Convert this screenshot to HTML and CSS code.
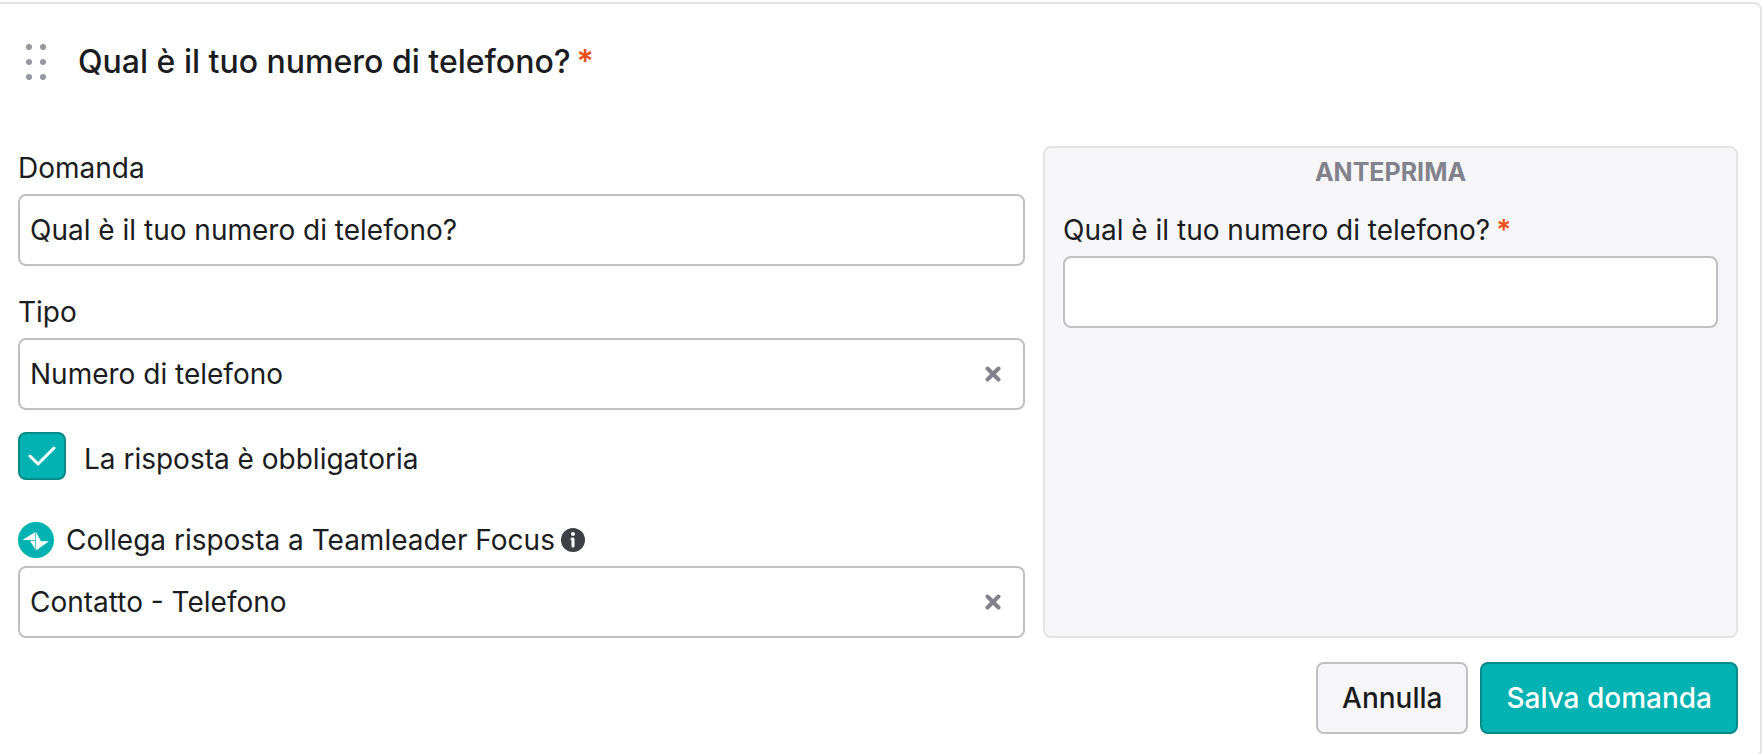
FILE: index.html
```
<!DOCTYPE html>
<html lang="it">
<head>
    <meta charset="UTF-8">
    <meta name="viewport" content="width=device-width, initial-scale=1.0">
    <title>Modifica domanda</title>
    <link rel="stylesheet" href="styles.css">
</head>
<body>
    <form class="question-card">
        <header class="question-header">
            <svg class="drag-handle" viewBox="0 0 20 36" fill="currentColor" aria-hidden="true">
                <circle cx="3" cy="3" r="3"/>
                <circle cx="17" cy="3" r="3"/>
                <circle cx="3" cy="18" r="3"/>
                <circle cx="17" cy="18" r="3"/>
                <circle cx="3" cy="33" r="3"/>
                <circle cx="17" cy="33" r="3"/>
            </svg>
            <h2 class="question-title">Qual è il tuo numero di telefono?<span class="required">*</span></h2>
        </header>

        <div class="question-body">
            <div class="fields">
                <div class="field">
                    <label class="label" for="question">Domanda</label>
                    <input class="input" id="question" type="text" value="Qual è il tuo numero di telefono?">
                </div>

                <div class="field">
                    <label class="label" for="type">Tipo</label>
                    <div class="select">
                        <select class="input" id="type">
                            <option>Numero di telefono</option>
                        </select>
                        <button class="clear" type="button" aria-label="Cancella tipo">
                            <svg viewBox="0 0 16 16" fill="none" stroke="currentColor" stroke-width="4" stroke-linecap="round">
                                <path d="M2.500 2.500l11 11M13.500 2.500l-11 11"/>
                            </svg>
                        </button>
                    </div>
                </div>

                <div class="check">
                    <input class="checkbox" id="required" type="checkbox" checked>
                    <svg class="check-mark" viewBox="0 0 28 20" fill="none" stroke="currentColor" stroke-width="3" stroke-linecap="round" stroke-linejoin="round" aria-hidden="true">
                        <path d="M2 10l8 8L26 2"/>
                    </svg>
                    <label class="check-label" for="required">La risposta è obbligatoria</label>
                </div>

                <div class="field">
                    <div class="label label-icons">
                        <svg class="logo" viewBox="0 0 36 36" aria-hidden="true">
                            <circle cx="18" cy="18" r="18" fill="#00b2b2"/>
                            <g fill="#fff">
                                <path d="M4.300 18L17.300 10v8z"/>
                                <path d="M18 10l5 9.300h8L19 27.700h-1z"/>
                                <path d="M12 18.700h5.400v8.800z"/>
                            </g>
                        </svg>
                        <label for="link">Collega risposta a Teamleader Focus</label>
                        <svg class="info" viewBox="0 0 24 24" aria-hidden="true">
                            <circle cx="12" cy="12" r="12" fill="#3f4046"/>
                            <circle cx="12" cy="6" r="2" fill="#fff"/>
                            <path d="M11 11h1v7" fill="none" stroke="#fff" stroke-width="3" stroke-linecap="round" stroke-linejoin="round"/>
                        </svg>
                    </div>
                    <div class="select">
                        <select class="input" id="link">
                            <option>Contatto - Telefono</option>
                        </select>
                        <button class="clear" type="button" aria-label="Cancella collegamento">
                            <svg viewBox="0 0 16 16" fill="none" stroke="currentColor" stroke-width="4" stroke-linecap="round">
                                <path d="M2.500 2.500l11 11M13.500 2.500l-11 11"/>
                            </svg>
                        </button>
                    </div>
                </div>
            </div>

            <section class="preview">
                <h3 class="preview-title">ANTEPRIMA</h3>
                <label class="label" for="preview">Qual è il tuo numero di telefono?<span class="required">*</span></label>
                <input class="input" id="preview" type="text">
            </section>
        </div>

        <footer class="actions">
            <button class="button" type="button">Annulla</button>
            <button class="button button-primary" type="submit">Salva domanda</button>
        </footer>
    </form>
</body>
</html>
```
FILE: styles.css
```
* {
    margin: 0;
    padding: 0;
    box-sizing: border-box;
}

body {
    font-family: Inter, "Liberation Sans", sans-serif;
    font-size: 28px;
    line-height: 36px;
    background: white;
    color: #1a1c20;
    padding-top: 2px;
}

.question-card {
    border: 2px solid #e4e4e6;
    border-left: none;
    border-radius: 0 8px 8px 0;
    padding: 0 22px 22px 18px;
}

.question-header {
    display: flex;
    align-items: center;
    gap: 32px;
    height: 116px;
    padding-left: 8px;
}

.drag-handle {
    width: 20px;
    height: 36px;
    color: #96969e;
}

.question-title {
    font-size: 32px;
    line-height: 40px;
    font-weight: 500;
}

.required {
    color: #eb5017;
    font-weight: 600;
    margin-left: 6px;
}

.question-body {
    display: grid;
    grid-template-columns: 1007fr 695fr;
    gap: 18px;
    padding-top: 26px;
}

.fields {
    padding-top: 4px;
}

.field .label {
    margin-bottom: 8px;
}

.field + .field {
    margin-top: 28px;
}

.label {
    display: block;
}

.input {
    display: block;
    width: 100%;
    height: 72px;
    padding: 0 10px;
    border: 2px solid #c0c0c4;
    border-radius: 8px;
    background: white;
    color: inherit;
    font: inherit;
    appearance: none;
}

.select {
    position: relative;
}

.clear {
    position: absolute;
    top: 16px;
    right: 12px;
    width: 40px;
    height: 40px;
    display: flex;
    align-items: center;
    justify-content: center;
    border: none;
    background: none;
    color: #82828c;
    cursor: pointer;
}

.clear svg {
    width: 16px;
    height: 16px;
}

.check {
    position: relative;
    display: flex;
    align-items: center;
    gap: 18px;
    margin: 22px 0 42px;
}

.checkbox {
    width: 48px;
    height: 48px;
    border: 2px solid #008a8a;
    border-radius: 8px;
    background: white;
    appearance: none;
}

.checkbox:checked {
    background: #00b2b2;
}

.check-mark {
    position: absolute;
    left: 10px;
    top: 14px;
    width: 28px;
    height: 20px;
    color: white;
    pointer-events: none;
}

.check-label {
    padding-top: 6px;
}

.label-icons {
    display: flex;
    align-items: center;
}

.logo {
    width: 36px;
    height: 36px;
    margin-right: 12px;
}

.info {
    width: 24px;
    height: 24px;
    margin-left: 6px;
}

.preview {
    padding: 6px 18px;
    border: 2px solid #e4e4e6;
    border-radius: 8px;
    background: #f6f6f9;
}

.preview-title {
    margin-bottom: 22px;
    font-size: 25px;
    line-height: 36px;
    font-weight: 700;
    color: #82828c;
    text-align: center;
}

.preview .label {
    margin-bottom: 8px;
}

.actions {
    display: flex;
    justify-content: flex-end;
    gap: 12px;
    margin-top: 24px;
}

.button {
    height: 72px;
    padding: 0 24px;
    border: 2px solid #c0c0c4;
    border-radius: 8px;
    background: #f6f6f9;
    color: inherit;
    font: inherit;
    font-weight: 500;
    cursor: pointer;
}

.button-primary {
    border-color: #008a8a;
    background: #00b2b2;
    color: white;
}
```
